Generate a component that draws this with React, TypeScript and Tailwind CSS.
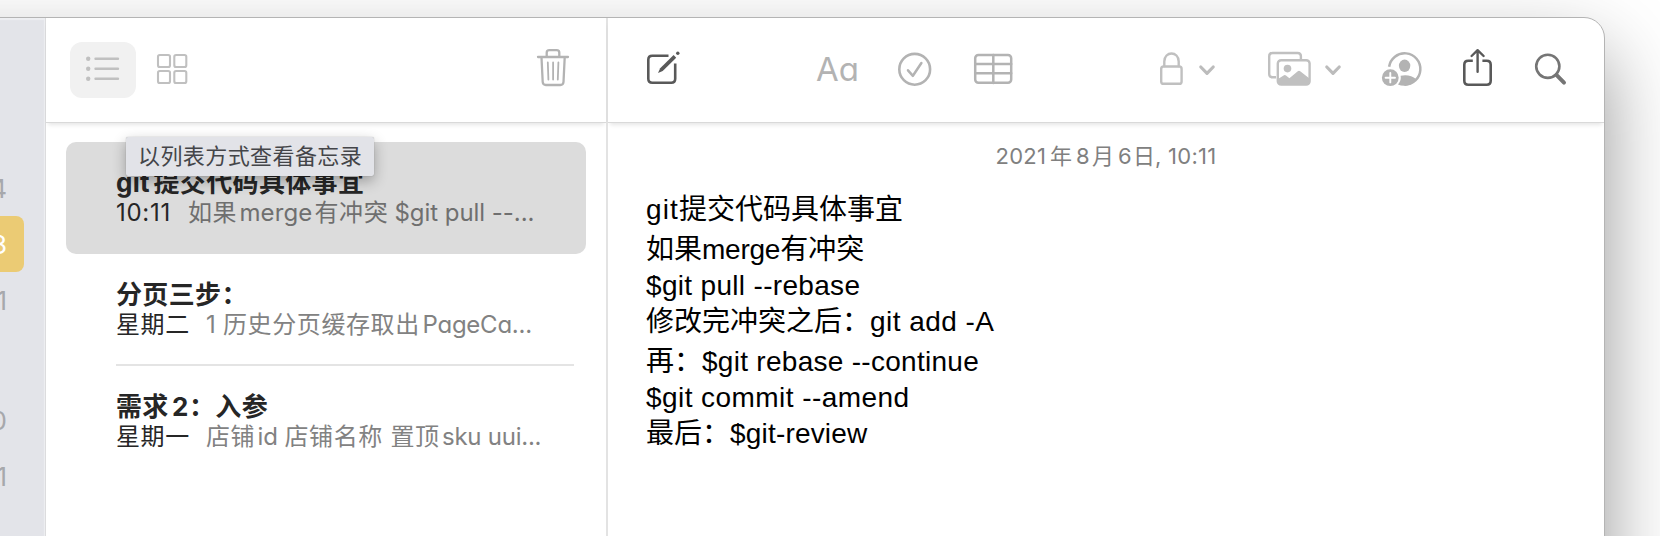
import React from "react";

const CJK = "font-['Inter','Noto_Sans_CJK_SC',sans-serif]";

type Run = { t: string; c: string };

function Runs({ runs, className }: { runs: Run[]; className: string }) {
  return (
    <div className={`flex whitespace-pre ${className}`}>
      {runs.map((r, i) => (
        <span key={i} className={`block shrink-0 ${r.c}`}>
          {r.t}
        </span>
      ))}
    </div>
  );
}

function Icon({ x, w, className, children }: { x: number; w: number; className: string; children: React.ReactNode }) {
  return (
    <svg
      viewBox={`${x} 46 ${w} 48`}
      width={w}
      height={48}
      fill="none"
      stroke="currentColor"
      strokeLinecap="round"
      strokeLinejoin="round"
      className={`block shrink-0 ${className}`}
    >
      {children}
    </svg>
  );
}

const counts = [
  { n: "4", c: "text-[#a7a8ac]" },
  { n: "3", c: "text-white bg-[#ebcb74] rounded-r-lg" },
  { n: "1", c: "text-[#a7a8ac]" },
  { n: "", c: "mb-2" },
  { n: "0", c: "text-[#a7a8ac]" },
  { n: "1", c: "text-[#a7a8ac]" },
];

function Sidebar() {
  return (
    <div className="w-[246px] shrink-0 border-r border-[#dcdcde] bg-[#e3e4e9] pt-[142px] pr-[21px] shadow-[inset_-1px_2px_1px_#eeeff2]">
      {counts.map((r, i) => (
        <div
          key={i}
          className={`flex h-14 items-center justify-end pr-[17px] text-[26px] tracking-normal ${CJK} ${r.c}`}
        >
          {r.n}
        </div>
      ))}
    </div>
  );
}

const notes = [
  {
    title: [
      { t: "git", c: "w-[37.5px] tracking-[0.3px]" },
      { t: "提交代码具体事宜", c: "tracking-[0.35px]" },
    ],
    sub: [
      { t: "10:11", c: "w-[72px] text-[#262626] tracking-[0.7px]" },
      { t: "如果", c: "w-[51.5px] tracking-[0.6px]" },
      { t: "merge", c: "w-[75px] tracking-[0.1px]" },
      { t: "有冲突", c: "w-[80px] tracking-[0.6px]" },
      { t: "$git pull --...", c: "tracking-[-0.05px]" },
    ],
  },
  {
    title: [{ t: "分页三步：", c: "tracking-[0.35px]" }],
    sub: [
      { t: "星期二", c: "w-[90px] text-[#262626] tracking-[0.6px]" },
      { t: "1", c: "w-[17px]" },
      { t: "历史分页缓存取出", c: "w-[199.5px] tracking-[0.6px]" },
      { t: "PageCa...", c: "tracking-[-0.25px]" },
    ],
  },
  {
    title: [
      { t: "需求", c: "w-[56px] tracking-[0.35px]" },
      { t: "2", c: "w-[17px]" },
      { t: "：入参", c: "tracking-[0.35px]" },
    ],
    sub: [
      { t: "星期一", c: "w-[90px] text-[#262626] tracking-[0.6px]" },
      { t: "店铺", c: "w-[51.5px] tracking-[0.6px]" },
      { t: "id", c: "w-[27px]" },
      { t: "店铺名称", c: "w-[106px] tracking-[0.6px]" },
      { t: "置顶", c: "w-[51.5px] tracking-[0.6px]" },
      { t: "sku uui...", c: "tracking-[-0.25px]" },
    ],
  },
];

function NoteList() {
  return (
    <div className="flex w-[562px] shrink-0 flex-col border-r-2 border-[#e3e3e3]">
      <div className="z-10 flex h-[105px] shrink-0 items-center border-b border-[#d9d9d9] pl-6 shadow-[0_4px_4px_-2px_rgba(0,0,0,0.1)]">
        <div className="flex h-14 w-[66px] items-center justify-center rounded-xl bg-[#f1f1f1]">
          <Icon x={84} w={38} className="text-[#c0c0c0]">
            <g fill="currentColor" stroke="none">
              <circle cx="88.2" cy="58.8" r="2.2" />
              <circle cx="88.2" cy="68.8" r="2.2" />
              <circle cx="88.2" cy="78.8" r="2.2" />
            </g>
            <path d="M95.5 58.8H118M95.5 68.8H118M95.5 78.8H118" strokeWidth="2.4" />
          </Icon>
        </div>
        <Icon x={155} w={34} className="ml-[19px] text-[#c0c0c0]">
          <g strokeWidth="2.1">
            <rect x="158" y="55" width="12" height="12" rx="1.8" />
            <rect x="174.3" y="55" width="12" height="12" rx="1.8" />
            <rect x="158" y="71" width="12" height="12" rx="1.8" />
            <rect x="174.3" y="71" width="12" height="12" rx="1.8" />
          </g>
        </Icon>
        <Icon x={535} w={36} className="ml-[346px] text-[#b3b3b3]">
          <path
            d="M538 57H568M546.7 56.5V52.8Q546.7 50.2 549.3 50.2H556.7Q559.3 50.2 559.3 52.8V56.5M541.5 57.5L542.7 82Q542.9 85 545.9 85H560.3Q563.3 85 563.5 82L564.7 57.5"
            strokeWidth="2.3"
          />
          <path d="M547.8 62.5L548.4 79.5M553.1 62.5V79.5M558.4 62.5L557.8 79.5" strokeWidth="1.8" />
        </Icon>
      </div>
      <div className={`relative flex flex-col pt-[19px] pl-5 [font-feature-settings:'cv11','ss03'] ${CJK}`}>
        {notes.map((n, i) => (
          <div
            key={i}
            className={
              i === 0
                ? "h-28 w-[520px] rounded-[10px] bg-[#dcdcdc] pt-[25px] pl-[50px]"
                : "h-28 w-[520px] pt-[25px] pl-[50px]"
            }
          >
            <Runs runs={n.title} className="h-[31px] text-[26px] leading-[31px] font-bold text-[#262626]" />
            <Runs
              runs={n.sub}
              className={
                i === 0
                  ? "h-[30px] text-[24px] leading-[30px] text-[#6f6f6f]"
                  : "h-[30px] text-[24px] leading-[30px] text-[#828282]"
              }
            />
            {i === 1 && <div className="mt-6 h-0.5 w-[458px] bg-[#e4e4e4]" />}
          </div>
        ))}
        <div className="absolute top-[14px] left-20 flex h-[39px] w-[248px] items-center rounded-xs bg-[#e2e3e8] pl-3 text-[22px] tracking-[0.42px] whitespace-nowrap text-[#444549] shadow-[0_0_1px_rgba(0,0,0,0.35),0_5px_14px_rgba(0,0,0,0.3)]">
          以列表方式查看备忘录
        </div>
      </div>
    </div>
  );
}

const lines: { c: string; runs: Run[] }[] = [
  { c: "", runs: [{ t: "git", c: "w-[33px] tracking-[1.1px]" }, { t: "提交代码具体事宜", c: "" }] },
  {
    c: "pt-1",
    runs: [
      { t: "如果", c: "" },
      { t: "merge", c: "tracking-[-0.25px]" },
      { t: "有冲突", c: "" },
    ],
  },
  { c: "", runs: [{ t: "$git pull --rebase", c: "tracking-[0.32px]" }] },
  { c: "", runs: [{ t: "修改完冲突之后：", c: "" }, { t: "git add -A", c: "tracking-[0.45px]" }] },
  { c: "pt-1", runs: [{ t: "再：", c: "" }, { t: "$git rebase --continue", c: "tracking-[0.28px]" }] },
  { c: "", runs: [{ t: "$git commit --amend", c: "tracking-[0.44px]" }] },
  { c: "", runs: [{ t: "最后：", c: "" }, { t: "$git-review", c: "tracking-[0.18px]" }] },
];

function Editor() {
  return (
    <div className="flex grow flex-col">
      <div className="flex h-[105px] shrink-0 items-center border-b border-[#d9d9d9] pl-9 shadow-[0_4px_4px_-2px_rgba(0,0,0,0.1)]">
        <Icon x={644} w={40} className="text-[#595959]">
          <path
            d="M668.5 55.7H652.3Q648.3 55.7 648.3 59.7V78.7Q648.3 82.7 652.3 82.7H671.2Q675.2 82.7 675.2 78.7V63.5"
            strokeWidth="2.6"
            strokeLinecap="butt"
          />
          <path d="M658 73L660.2 68.3L673.6 55.1L676.2 57.7L662.7 71Z" fill="currentColor" stroke="none" />
          <circle cx="677.8" cy="53.2" r="1.7" fill="currentColor" stroke="none" />
        </Icon>
        <div
          className={`mb-0.5 ml-[132px] w-[41px] text-[33px] leading-10 whitespace-nowrap text-[#b3b3b3] [font-feature-settings:'cv11'] ${CJK}`}
        >
          Aa
        </div>
        <Icon x={896} w={38} className="ml-[39px] text-[#b3b3b3]">
          <circle cx="914.7" cy="69.3" r="15.4" strokeWidth="2.6" />
          <path d="M908 70.3L912.9 75.8L921.4 63" strokeWidth="2.5" />
        </Icon>
        <Icon x={972} w={42} className="ml-[38px] text-[#b3b3b3]">
          <rect x="975.2" y="55" width="36" height="27.8" rx="3.2" strokeWidth="2.5" />
          <path d="M975.2 64H1011.2M975.2 73.3H1011.2M993.3 55V83" strokeWidth="2.5" />
        </Icon>
        <Icon x={1158} w={26} className="ml-36 text-[#c0c0c0]">
          <rect x="1161.2" y="66.5" width="20.4" height="17.3" rx="2.4" strokeWidth="2.4" />
          <path d="M1164.3 66V61.5C1164.3 50.8 1178.7 50.8 1178.7 61.5V66" strokeWidth="2.4" />
        </Icon>
        <Icon x={1198} w={18} className="ml-[14px] text-[#bcbcbc]">
          <path d="M1200.8 67L1207 73.3L1213.2 67" strokeWidth="3.2" />
        </Icon>
        <Icon x={1266} w={47} className="ml-[50px] text-[#c0c0c0]">
          <path
            d="M1276 77.2H1272.5Q1269.2 77.2 1269.2 73.9V56.3Q1269.2 53 1272.5 53H1297.6Q1300.9 53 1300.9 56.3V59"
            strokeWidth="2.4"
            strokeLinecap="butt"
          />
          <rect x="1277.8" y="60.2" width="31.8" height="24.4" rx="3.4" strokeWidth="2.4" />
          <circle cx="1287.5" cy="68.6" r="3.8" fill="currentColor" stroke="none" />
          <path
            d="M1278 79L1284 75.2Q1285 74.6 1286 75.4L1289.4 78.2L1297.8 71.2Q1299 70.4 1300.2 71.2L1309.5 78.6V82Q1309.5 85 1306.5 85H1281Q1278 85 1278 82Z"
            fill="currentColor"
            stroke="none"
          />
        </Icon>
        <Icon x={1324} w={18} className="ml-[11px] text-[#bcbcbc]">
          <path d="M1326.8 67L1333 73.3L1339.2 67" strokeWidth="3.2" />
        </Icon>
        <Icon x={1380} w={43} className="ml-[38px] text-[#b3b3b3]">
          <path
            d="M1389.1 66.8A15.7 15.7 0 1 1 1404.5 84.7"
            strokeWidth="2.5"
            strokeLinecap="butt"
          />
          <ellipse cx="1404.6" cy="65.8" rx="5.7" ry="6.2" fill="currentColor" stroke="none" />
          <path
            d="M1400.6 75.7Q1410 73.8 1416.2 79.3Q1411.5 85.8 1404.5 85.8Q1400.5 85.8 1398 84.6Q1401.6 80.2 1400.6 75.7Z"
            fill="currentColor"
            stroke="none"
          />
          <circle cx="1390.3" cy="77.7" r="8.4" fill="currentColor" stroke="none" />
          <path d="M1385.6 77.7H1395M1390.3 73V82.4" stroke="#fff" strokeWidth="1.9" />
        </Icon>
        <Icon x={1460} w={36} className="ml-[37px] text-[#595959]">
          <path
            d="M1472.8 60.8H1468.3Q1464.3 60.8 1464.3 64.8V80.7Q1464.3 84.7 1468.3 84.7H1486.7Q1490.7 84.7 1490.7 80.7V64.8Q1490.7 60.8 1486.7 60.8H1482.4"
            strokeWidth="2.6"
            strokeLinecap="butt"
          />
          <path d="M1477.6 71.8V50.6M1471.6 56L1477.6 50.2L1483.6 56" strokeWidth="2.4" />
        </Icon>
        <Icon x={1533} w={34} className="ml-[37px] text-[#757575]">
          <circle cx="1547.8" cy="66.3" r="11.6" strokeWidth="2.6" />
          <path d="M1556.4 74.9L1564 82.6" strokeWidth="4" />
        </Icon>
      </div>
      <Runs
        className={`mt-[19px] h-7 justify-center text-[22px] leading-7 text-[#808080] ${CJK}`}
        runs={[
          { t: "2021", c: "w-[54.5px] tracking-[0.2px]" },
          { t: "年", c: "w-[26px]" },
          { t: "8", c: "w-[16px]" },
          { t: "月", c: "w-[26px]" },
          { t: "6", c: "w-[15px]" },
          { t: "日", c: "w-[22px]" },
          { t: ", 10:11", c: "tracking-[0.25px]" },
        ]}
      />
      <div className="mt-[22px] flex flex-col pl-[38px] font-['Liberation_Sans','Noto_Sans_CJK_SC',sans-serif] text-[28px] leading-9 text-black">
        {lines.map((l, i) => (
          <div key={i} className={l.c}>
            <Runs className="h-9" runs={l.runs} />
          </div>
        ))}
      </div>
    </div>
  );
}

export default function App() {
  return (
    <div className="h-[536px] w-[1660px] overflow-hidden bg-white pt-[17px]">
      <div className="-ml-[201px] flex h-[900px] w-[1806px] overflow-hidden rounded-[21px] border border-[#b4b4b4] bg-white shadow-[0_36px_80px_rgba(0,0,0,0.42)]">
        <Sidebar />
        <NoteList />
        <Editor />
      </div>
    </div>
  );
}
